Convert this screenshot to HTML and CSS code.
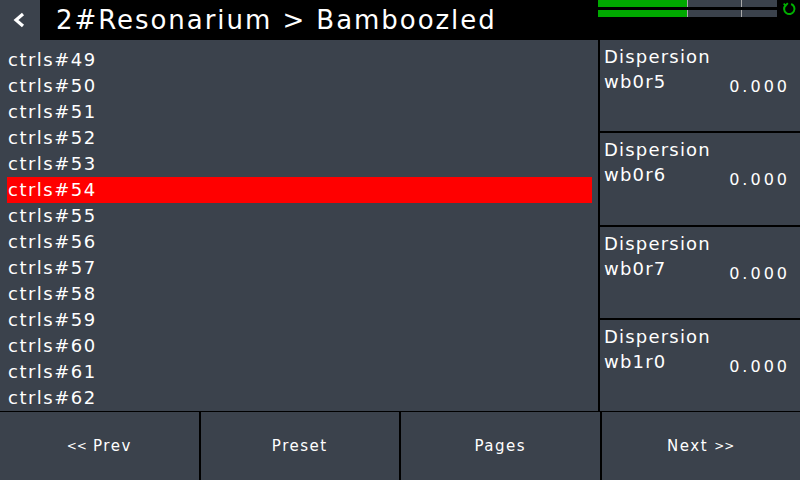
FILE: index.html
```html
<!DOCTYPE html>
<html>
<head>
<meta charset="utf-8">
<link rel="stylesheet" href="styles.css">
</head>
<body>
<div class="screen">
  <header class="top">
    <div class="back">
      <svg width="14" height="16" viewBox="0 0 14 16"><polyline points="10,2 3,8 10,14" fill="none" stroke="#fff" stroke-width="3.2" stroke-linejoin="miter"/></svg>
    </div>
    <div class="title">2#Resonarium &gt; Bamboozled</div>
    <div class="meters">
      <div class="meter"><div class="fill" style="width:89px"></div><span class="tick t1"></span><span class="tick t2"></span></div>
      <div class="meter"><div class="fill" style="width:89px"></div><span class="tick t1"></span><span class="tick t2"></span></div>
    </div>
    <svg class="refresh" width="15" height="15" viewBox="0 0 15 15">
      <path d="M3.6 4.2 A5.2 5.2 0 1 0 9.2 3" fill="none" stroke="#00b000" stroke-width="2"/>
      <polyline points="1.6,2.6 3.8,4.4 5.8,2.2" fill="none" stroke="#00b000" stroke-width="1.8"/>
    </svg>
  </header>
  <main class="content">
    <ul class="list">
      <li class="row">ctrls#49</li>
      <li class="row">ctrls#50</li>
      <li class="row">ctrls#51</li>
      <li class="row">ctrls#52</li>
      <li class="row">ctrls#53</li>
      <li class="row selected">ctrls#54</li>
      <li class="row">ctrls#55</li>
      <li class="row">ctrls#56</li>
      <li class="row">ctrls#57</li>
      <li class="row">ctrls#58</li>
      <li class="row">ctrls#59</li>
      <li class="row">ctrls#60</li>
      <li class="row">ctrls#61</li>
      <li class="row">ctrls#62</li>
    </ul>
    <aside class="params">
      <div class="param">
        <div class="pname">Dispersion</div>
        <div class="pline"><span class="pid">wb0r5</span><span class="pval">0.000</span></div>
      </div>
      <div class="param">
        <div class="pname">Dispersion</div>
        <div class="pline"><span class="pid">wb0r6</span><span class="pval">0.000</span></div>
      </div>
      <div class="param">
        <div class="pname">Dispersion</div>
        <div class="pline"><span class="pid">wb0r7</span><span class="pval">0.000</span></div>
      </div>
      <div class="param">
        <div class="pname">Dispersion</div>
        <div class="pline"><span class="pid">wb1r0</span><span class="pval">0.000</span></div>
      </div>
    </aside>
  </main>
  <footer class="buttons">
    <div class="btn"><span class="chev">&lt;&lt;</span> Prev</div>
    <div class="btn">Preset</div>
    <div class="btn">Pages</div>
    <div class="btn">Next <span class="chev">&gt;&gt;</span></div>
  </footer>
</div>
</body>
</html>
```
FILE: styles.css
```css
html, body {
  margin: 0;
  padding: 0;
  background: #000;
}
.screen {
  width: 800px;
  height: 480px;
  display: flex;
  flex-direction: column;
  font-family: "DejaVu Sans", "Liberation Sans", sans-serif;
  color: #fff;
  overflow: hidden;
}
.top {
  height: 40px;
  display: flex;
  align-items: flex-start;
  background: #000;
  flex: none;
}
.back {
  width: 40px;
  height: 40px;
  background: #3b424c;
  display: flex;
  align-items: center;
  justify-content: center;
}
.back svg { margin-left: -1px; }
.title {
  margin-left: 16px;
  height: 40px;
  line-height: 40px;
  font-size: 26px;
  letter-spacing: 1.95px;
  white-space: nowrap;
}
.meters {
  margin-left: auto;
  width: 179px;
  display: flex;
  flex-direction: column;
  gap: 3px;
}
.meter {
  position: relative;
  height: 7px;
  background: #3b424c;
}
.fill {
  height: 100%;
  background: #00a800;
}
.tick {
  position: absolute;
  top: 0;
  width: 1px;
  height: 100%;
  background: #a8a8a8;
}
.t1 { left: 89px; }
.t2 { left: 143px; }
.refresh {
  margin: 1px 3px 0 5px;
}
.content {
  height: 371px;
  display: flex;
  background: #3b424c;
  flex: none;
}
.list {
  list-style: none;
  margin: 0;
  width: 598px;
  box-sizing: border-box;
  padding: 7px 6px 0 7px;
}
.row {
  height: 26px;
  line-height: 26px;
  font-size: 18px;
  letter-spacing: 1.5px;
  padding-left: 1px;
  white-space: nowrap;
}
.row.selected {
  background: #ff0000;
}
.params {
  width: 200px;
  border-left: 2px solid #000;
  display: flex;
  flex-direction: column;
}
.param {
  flex: 1;
  border-bottom: 2px solid #000;
  padding: 6px 13px 0 4px;
}
.param:last-child { border-bottom: none; }
.pname {
  font-size: 18px;
  line-height: 22px;
  letter-spacing: 1.2px;
}
.pline {
  display: flex;
  justify-content: space-between;
  align-items: flex-start;
  margin-top: 3px;
}
.pid {
  font-size: 18px;
  line-height: 22px;
  letter-spacing: 1.2px;
}
.pval {
  font-size: 16px;
  line-height: 20px;
  letter-spacing: 3px;
  margin-top: 6px;
  margin-right: -3px;
}
.buttons {
  height: 69px;
  flex: none;
  display: flex;
  gap: 2px;
  padding-top: 1px;
  box-sizing: border-box;
  background: #000;
}
.btn {
  flex: 1;
  background: #3b424c;
  display: flex;
  align-items: center;
  justify-content: center;
  font-size: 15px;
  letter-spacing: 1.5px;
  white-space: pre;
}
.chev {
  font-size: 12px;
  letter-spacing: 0;
}
```
